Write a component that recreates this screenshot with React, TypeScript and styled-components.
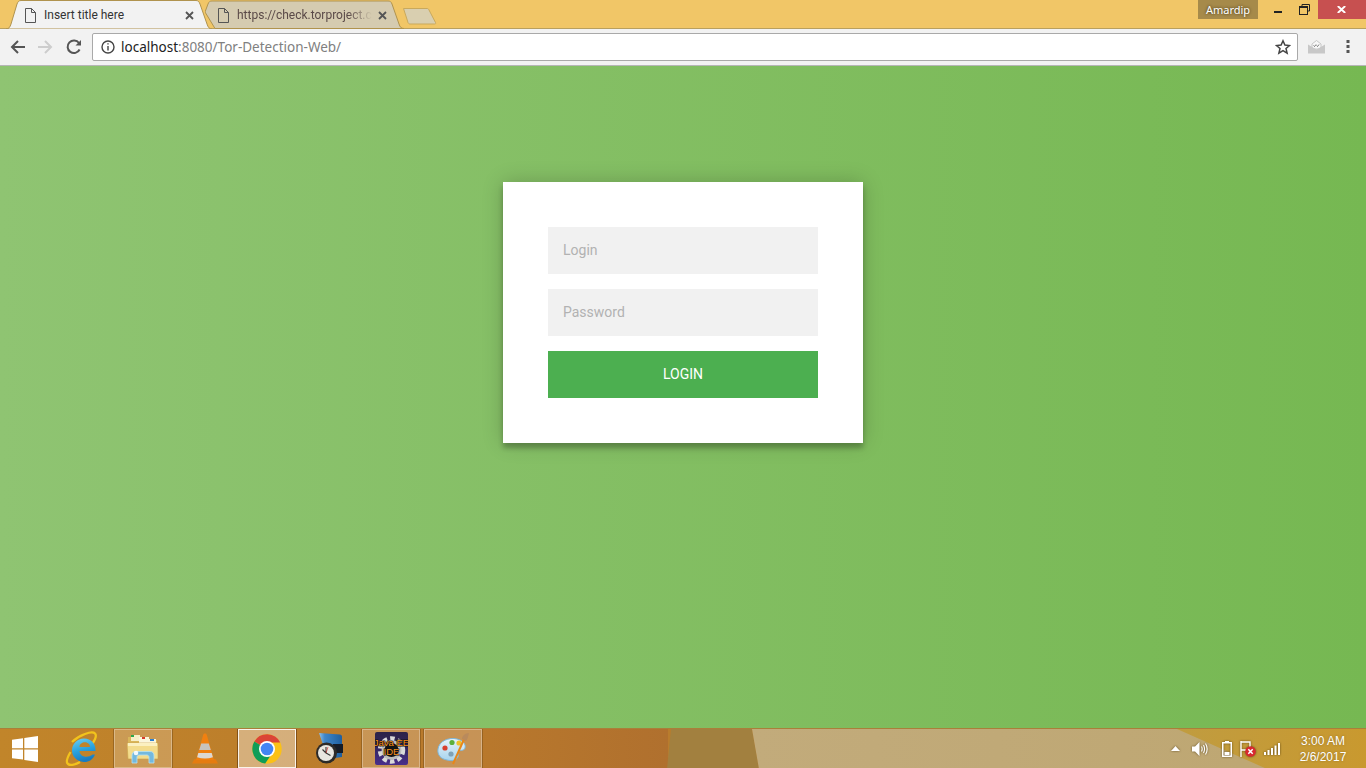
import React from "react";
import styled, { createGlobalStyle } from "styled-components";

const Global = createGlobalStyle`
  html, body { margin: 0; padding: 0; height: 100%; overflow: hidden; }
  #root { height: 100%; }
  * { box-sizing: border-box; }
`;

const Screen = styled.div`
  width: 1366px;
  height: 768px;
  display: flex;
  flex-direction: column;
  font-family: "Open Sans", "Liberation Sans", sans-serif;
`;

const TitleBar = styled.div`
  height: 29px;
  flex: none;
  display: flex;
  justify-content: space-between;
  background: #f1c667;
  border-bottom: 1px solid #b9a05f;
  position: relative;
`;

const TabStrip = styled.div`
  display: flex;
  align-items: flex-start;
  padding-left: 6px;
`;

const Tab = styled.div<{ $w: number; $active?: boolean; $ml?: number }>`
  position: relative;
  width: ${(p) => p.$w}px;
  height: 29px;
  margin-left: ${(p) => p.$ml ?? 0}px;
  z-index: ${(p) => (p.$active ? 2 : 1)};
  flex: none;
`;

const TabShape = styled.svg`
  position: absolute;
  left: 0;
  top: 0;
`;

const TabIcon = styled.svg<{ $left: number }>`
  position: absolute;
  top: 8px;
  left: ${(p) => p.$left}px;
`;

const TabLabel = styled.span<{ $left: number; $active?: boolean }>`
  position: absolute;
  top: 6px;
  left: ${(p) => p.$left}px;
  font: 12px/18px Roboto, "Liberation Sans", sans-serif;
  white-space: nowrap;
  color: ${(p) => (p.$active ? "#333" : "#5b4a48")};
  ${(p) =>
    p.$active
      ? ""
      : "-webkit-mask-image: linear-gradient(to right, #000 82%, transparent 100%);"}
`;

const TabClose = styled.svg<{ $right: number }>`
  position: absolute;
  top: 11px;
  right: ${(p) => p.$right}px;
`;

const NewTab = styled.svg`
  margin: 7px 0 0 -3px;
  position: relative;
  z-index: 0;
  flex: none;
`;

const WindowControls = styled.div`
  display: flex;
  align-items: flex-start;
`;

const UserBadge = styled.div`
  width: 60px;
  height: 19px;
  background: #a68a4a;
  color: #fff;
  font: 11px/19px "Noto Sans", "Liberation Sans", sans-serif;
  text-align: center;
  text-shadow: 0 0 3px rgba(40, 30, 10, 0.9);
`;

const WinButton = styled.div<{ $w: number; $close?: boolean }>`
  width: ${(p) => p.$w}px;
  height: 19px;
  display: flex;
  align-items: center;
  justify-content: center;
  background: ${(p) => (p.$close ? "#c75050" : "transparent")};
`;

const MinGlyph = styled.svg`
  margin: 5px 0 0 10px;
`;

const RestoreGlyph = styled.svg`
  margin-left: 2px;
`;

const CloseXGlyph = styled.svg`
  margin-right: 2px;
`;

const Toolbar = styled.div`
  height: 37px;
  flex: none;
  display: flex;
  align-items: center;
  background: #f2f2f2;
  border-bottom: 1px solid #b6b6b6;
  padding-left: 7px;
`;

const NavButton = styled.div<{ $w: number }>`
  width: ${(p) => p.$w}px;
  height: 28px;
  display: flex;
  align-items: center;
  justify-content: center;
  flex: none;
`;

const ReloadGlyph = styled.svg`
  margin-right: 3px;
`;

const Omnibox = styled.div`
  width: 1206px;
  height: 28px;
  margin: 0 4px 0 2px;
  flex: none;
  display: flex;
  align-items: center;
  background: #fff;
  border: 1px solid #a9a9a9;
  border-radius: 2px;
  padding: 0 6px 0 8px;
`;

const UrlText = styled.div`
  flex: 1;
  margin-left: 6px;
  font: 13.5px/20px "Noto Sans", "Liberation Sans", sans-serif;
  color: #808080;
  white-space: nowrap;
`;

const UrlHost = styled.span`
  color: #222;
`;

const Page = styled.main`
  flex: 1;
  display: flex;
  flex-direction: column;
  align-items: center;
  padding-top: 116px;
  background: linear-gradient(to left, #76b852, #8fc472);
`;

const Card = styled.form`
  width: 360px;
  height: 261px;
  padding: 45px;
  display: flex;
  flex-direction: column;
  gap: 15px;
  background: #fff;
  box-shadow: 0 0 20px rgba(0, 0, 0, 0.2), 0 5px 5px rgba(0, 0, 0, 0.24);
`;

const Field = styled.input`
  width: 270px;
  height: 47px;
  flex: none;
  border: 0;
  outline: 0;
  padding: 14px 15px 16px;
  background: #f1f1f1;
  font: 14px Roboto, sans-serif;
  color: #333;
  &::placeholder { color: #b2b2b2; opacity: 1; }
`;

const Submit = styled.button`
  width: 270px;
  height: 47px;
  flex: none;
  border: 0;
  padding: 0 0 2px;
  background: #4caf50;
  color: #fff;
  font: 14px Roboto, sans-serif;
  text-transform: uppercase;
`;

const Taskbar = styled.footer`
  height: 40px;
  flex: none;
  display: flex;
  align-items: stretch;
  justify-content: space-between;
  position: relative;
  overflow: hidden;
  background: #b97c2d;
  border-top: 1px solid #a97f3a;
`;

const Wallpaper = styled.svg`
  position: absolute;
  left: 0;
  top: 0;
`;

const Launchers = styled.div`
  position: relative;
  display: flex;
  gap: 4px;
`;

const Launcher = styled.div<{ $w?: number; $state?: "open" | "active" }>`
  width: ${(p) => p.$w ?? 58}px;
  height: 39px;
  display: flex;
  align-items: center;
  justify-content: center;
  flex: none;
  background: ${(p) =>
    p.$state === "active"
      ? "rgba(255,255,255,.38)"
      : p.$state === "open"
      ? "rgba(255,255,255,.2)"
      : "transparent"};
  box-shadow: ${(p) =>
    p.$state === "active"
      ? "inset 0 0 0 1px rgba(255,255,255,.85), 0 0 0 1px rgba(90,50,10,.6)"
      : p.$state === "open"
      ? "inset 0 0 0 1px rgba(255,255,255,.3), 0 0 0 1px rgba(110,70,20,.45)"
      : "none"};
`;

const WindowsGlyph = styled.svg`
  margin-left: 2px;
`;

const Tray = styled.div`
  position: relative;
  display: flex;
  align-items: center;
`;

const TrayIcon = styled.svg<{ $ml: number }>`
  margin-left: ${(p) => p.$ml}px;
  flex: none;
  filter: drop-shadow(0 0 1px rgba(70, 50, 10, 0.75));
`;

const Clock = styled.div`
  width: 62px;
  margin-left: 12px;
  margin-right: 12px;
  color: #fff;
  font: 12px/16px "Liberation Sans", sans-serif;
  text-align: center;
  text-shadow: 0 0 2px rgba(90, 70, 20, 0.5);
`;

const DocGlyph = ({ left }: { left: number }) => (
  <TabIcon $left={left} width="14" height="15" viewBox="0 0 14 15" fill="none">
    <path d="M2.500 .5h6l4 4v10h-10z M8.500 .5v4h4" stroke="#555" strokeWidth="1" />
  </TabIcon>
);

const CloseGlyph = ({ right }: { right: number }) => (
  <TabClose $right={right} width="9" height="9" viewBox="0 0 9 9">
    <path d="M1 1l7 7M8 1L1 8" stroke="#555" strokeWidth="1.800" />
  </TabClose>
);

const WindowsLogo = () => (
  <WindowsGlyph width="26" height="26" viewBox="0 0 26 26" fill="#fff">
    <path d="M0 3.800 11 2.300v10H0zM12.300 2.100 26 0v12.300H12.300zM0 13.600h11v10L0 22.200zM12.300 13.600H26V26l-13.700-2.100z" />
  </WindowsGlyph>
);

const IeLogo = () => (
  <svg width="32" height="36" viewBox="0 0 32 36">
    <defs>
      <linearGradient id="ieBlue" x1="0" y1="0" x2="0.300" y2="1">
        <stop offset="0" stopColor="#6fd0f4" />
        <stop offset="0.550" stopColor="#2aa3de" />
        <stop offset="1" stopColor="#1a7cc0" />
      </linearGradient>
    </defs>
    <path d="M7 11C14 4 27-.5 30 2.500 31.500 4 30.500 8 27.500 12.500M5.500 21C2 27 1 31.500 3 33c2.500 2 8 .5 12-2" fill="none" stroke="#f2c31c" strokeWidth="2.300" />
    <g transform="translate(3 0)">
      <path d="M16 7.500c7 0 12 5 11.500 12.500H11.500c.5 6 8 7.500 13 3.500h2.500C25 29 20 31.500 15.500 31 9 30.500 4 25.500 4 19.500 4 12.500 9.500 7.500 16 7.500zM11.500 16h10.500c0-6-10-6.500-10.500 0z" fill="url(#ieBlue)" fillRule="evenodd" />
    </g>
  </svg>
);

const FolderIcon = () => (
  <svg width="32" height="30" viewBox="0 0 32 30">
    <path d="M1 3h11l2 3h16v8H1z" fill="#d9b65a" />
    <rect x="4" y="1" width="9" height="6" fill="#f8efc8" />
    <rect x="4" y="1" width="3" height="2" fill="#2da84a" />
    <rect x="12" y="3" width="10" height="6" fill="#fbf6dc" />
    <rect x="15" y="3" width="3" height="2" fill="#d83a2a" />
    <rect x="20" y="5" width="9" height="5" fill="#fbf6dc" />
    <rect x="23" y="5" width="4" height="2" fill="#2b7fd0" />
    <path d="M0 9h31v16H1z" fill="#f3dc8c" stroke="#c9a24a" strokeWidth=".6" />
    <path d="M1 9h29v3H1z" fill="#fbf0c0" />
    <path d="M5 29v-7c0-3 1-4.500 4-4.500h14c3 0 4 1.500 4 4.500v7h-5v-6c0-1-1-2-2-2h-8c-1 0-2 1-2 2v6z" fill="#74b9de" stroke="#b4e2f5" strokeWidth=".8" />
    <circle cx="9" cy="19" r="2.300" fill="#fff" opacity=".9" />
  </svg>
);

const VlcIcon = () => (
  <svg width="26" height="31" viewBox="0 0 26 31">
    <path d="M2.500 26h21L26 30.500H0z" fill="#e57c10" />
    <path d="M4 27h18L14.700 1.500c-.4-1.500-3-1.500-3.400 0z" fill="#f08010" />
    <path d="M9.200 10.500h7.600l2 6.500H7.200z" fill="#c7c3bd" />
    <path d="M6.300 20h13.400l1.200 4.200c-5 1.600-10.800 1.600-15.800 0z" fill="#dcd8d2" />
  </svg>
);

const ChromeIcon = () => (
  <svg width="30" height="30" viewBox="0 0 30 30">
    <circle cx="15" cy="15" r="14.700" fill="#fbc116" />
    <path d="M15 15 2.300 7.600A14.700 14.700 0 0 1 28.200 8.500H15z" fill="#db4437" />
    <path d="M15 15 2.300 7.600a14.700 14.700 0 0 0 10.900 22L19 21z" fill="#0f9d58" />
    <circle cx="15" cy="15" r="8" fill="#fff" />
    <circle cx="15" cy="15" r="6.300" fill="#4285f4" />
  </svg>
);

const ClockBookIcon = () => (
  <svg width="28" height="31" viewBox="0 0 28 31">
    <defs>
      <linearGradient id="bookBlue" x1="0" y1="0" x2="1" y2="0">
        <stop offset="0" stopColor="#8cc0ea" />
        <stop offset="0.250" stopColor="#3f86c8" />
        <stop offset="1" stopColor="#1f5f9e" />
      </linearGradient>
    </defs>
    <path d="M4 0l21 1.500c1 0 2 1 2 2V24l-14 2z" fill="url(#bookBlue)" />
    <rect x="18" y="11" width="10" height="9" fill="#161c26" />
    <circle cx="11.500" cy="20" r="10.500" fill="#2c2a28" />
    <circle cx="11" cy="20" r="8" fill="#e8e6e0" />
    <path d="M11 20V14M11 20l4.500 2.500M11 20l-3.500-3.500" stroke="#333" strokeWidth="1.100" fill="none" />
    <path d="M11 20l2-6" stroke="#c33" strokeWidth=".7" />
  </svg>
);

const JavaEeIcon = () => (
  <svg width="33" height="33" viewBox="0 0 33 33">
    <defs>
      <linearGradient id="eeBg" x1="0" y1="0" x2="0" y2="1">
        <stop offset="0" stopColor="#2c2348" />
        <stop offset="0.450" stopColor="#31265c" />
        <stop offset="1" stopColor="#4a2f8c" />
      </linearGradient>
    </defs>
    <rect width="33" height="33" rx="2" fill="url(#eeBg)" />
    <circle cx="16.500" cy="18" r="11.500" fill="none" stroke="#d9d9d9" strokeWidth="4.500" strokeDasharray="4.500 3" />
    <circle cx="16.500" cy="18" r="10" fill="#bdbdbd" />
    <circle cx="16.500" cy="18" r="7" fill="#141414" />
    <text x="16.500" y="14" fontFamily="Liberation Sans, sans-serif" fontSize="9.500" fill="#f8921e" stroke="#111" strokeWidth="1.200" paintOrder="stroke" textAnchor="middle">Java EE</text>
    <text x="16.500" y="23" fontFamily="Liberation Sans, sans-serif" fontSize="9.500" fill="#f8921e" stroke="#111" strokeWidth="1.200" paintOrder="stroke" textAnchor="middle">IDE</text>
  </svg>
);

const PaletteIcon = () => (
  <svg width="34" height="34" viewBox="0 0 34 34">
    <defs>
      <linearGradient id="palBg" x1="0" y1="0" x2="0" y2="1">
        <stop offset="0" stopColor="#e6f3fa" />
        <stop offset="1" stopColor="#a8d4ee" />
      </linearGradient>
    </defs>
    <path d="M2 17C3 9 13 5 21 7c6 1.500 9 5 8 9-1 3-4 2-6 3-2 2 0 4-1 6-2 4-7 4-11 3C5 27 1 23 2 17z" fill="url(#palBg)" stroke="#7db7dc" strokeWidth="1" />
    <circle cx="9" cy="16" r="2.600" fill="#d8402e" />
    <circle cx="16" cy="10.500" r="2.600" fill="#5cb03c" />
    <circle cx="23" cy="11" r="2.600" fill="#efc12a" />
    <circle cx="15" cy="22" r="2.600" fill="#7fa2b8" />
    <path d="M29 5 17 32" stroke="#e8871a" strokeWidth="2" />
    <path d="M26 7c0-3 3-6 7-6-1 3-1 6-3 8z" fill="#b98a5c" />
  </svg>
);

export default function App() {
  return (
    <Screen>
      <Global />
      <TitleBar>
        <TabStrip>
          <Tab $w={206} $active>
            <TabShape width="206" height="29" viewBox="0 0 206 29">
              <path d="M0 29 C3 29 4 27 5 24L11 4C12 1.500 13 .5 15 .5H190C192 .5 193 1.500 194 4L201 24C202 27 203 29 206 29Z" fill="#f2f2f2" stroke="#b0934e" />
            </TabShape>
            <DocGlyph left={17} />
            <TabLabel $left={38} $active>Insert title here</TabLabel>
            <CloseGlyph right={18} />
          </Tab>
          <Tab $w={200} $ml={-7}>
            <TabShape width="200" height="29" viewBox="0 0 200 29">
              <path d="M0 12L3 4C4 1.500 5 1 7 1H183C185 1 186 1.500 187 4L194 24C195 27 196 28.500 199 28.500H10Z" fill="#d5cbb0" stroke="#b0934e" />
            </TabShape>
            <DocGlyph left={11} />
            <TabLabel $left={32}>https://check.torproject.c</TabLabel>
            <CloseGlyph right={18} />
          </Tab>
          <NewTab width="36" height="18" viewBox="0 0 36 18">
            <path d="M1.500 1.500H25C26 1.500 26.500 2 27 3L33.500 15.500C34 16.500 33.500 17 32.500 17H8C7 17 6.500 16.500 6 15.500Z" fill="#d9cfb0" stroke="#c9a95c" />
          </NewTab>
        </TabStrip>
        <WindowControls>
          <UserBadge>Amardip</UserBadge>
          <WinButton $w={30}>
            <MinGlyph width="8" height="2" viewBox="0 0 8 2"><rect width="8" height="2" fill="#222" /></MinGlyph>
          </WinButton>
          <WinButton $w={30}>
            <RestoreGlyph width="11" height="11" viewBox="0 0 11 11" fill="none" stroke="#222">
              <path d="M3 2.500V.5h7.500V7H8.500" />
              <rect x=".5" y="2.500" width="8" height="8" strokeWidth="1" />
              <path d="M.5 3.500h8" />
            </RestoreGlyph>
          </WinButton>
          <WinButton $w={48} $close>
            <CloseXGlyph width="9" height="7" viewBox="0 0 9 7"><path d="M.8 0l7.400 7M8.200 0L.8 7" stroke="#fff" strokeWidth="1.900" /></CloseXGlyph>
          </WinButton>
        </WindowControls>
      </TitleBar>

      <Toolbar>
        <NavButton $w={22}>
          <svg width="16" height="16" viewBox="0 0 16 16" fill="none" stroke="#555" strokeWidth="2"><path d="M15 8H2M8 2L2 8l6 6" /></svg>
        </NavButton>
        <NavButton $w={32}>
          <svg width="16" height="16" viewBox="0 0 16 16" fill="none" stroke="#cdcdcd" strokeWidth="2"><path d="M1 8h13M8 2l6 6-6 6" /></svg>
        </NavButton>
        <NavButton $w={29}>
          <ReloadGlyph width="16" height="16" viewBox="0 0 16 16" fill="none" stroke="#555" strokeWidth="2">
            <path d="M13.600 10.500A6.300 6.300 0 1 1 13 4" />
            <path d="M15 1v5.500H9.500z" fill="#555" stroke="none" />
          </ReloadGlyph>
        </NavButton>
        <Omnibox>
          <svg width="14" height="14" viewBox="0 0 14 14" fill="none" stroke="#444" strokeWidth="1.400">
            <circle cx="7" cy="7" r="6" />
            <path d="M7 6v4.500M7 3.200v1.400" />
          </svg>
          <UrlText><UrlHost>localhost</UrlHost>:8080/Tor-Detection-Web/</UrlText>
          <svg width="16" height="16" viewBox="0 0 16 16" fill="none" stroke="#444" strokeWidth="1.500">
            <path d="M8 1.800l1.900 4.300 4.600.4-3.500 3 1.100 4.600L8 11.700l-4.100 2.400 1.100-4.600-3.500-3 4.600-.4z" />
          </svg>
        </Omnibox>
        <NavButton $w={28}>
          <svg width="17" height="14" viewBox="0 0 17 14">
            <path d="M4 4l4.500-3.500L13 4v5H4z" fill="#f8f8f8" stroke="#bbb" strokeWidth=".8" />
            <path d="M0 4.500l8.500 5 8.500-5V13.500H0z" fill="#c8c8c8" />
            <path d="M5.500 5.500l1 1 1.500-2M8.500 5.500l1 1 1.500-2" stroke="#555" strokeWidth=".8" fill="none" />
          </svg>
        </NavButton>
        <NavButton $w={36}>
          <svg width="4" height="14" viewBox="0 0 4 14" fill="#555">
            <rect x=".5" y="0" width="3" height="3" />
            <rect x=".5" y="5" width="3" height="3" />
            <rect x=".5" y="10" width="3" height="3" />
          </svg>
        </NavButton>
      </Toolbar>

      <Page>
        <Card onSubmit={(e) => e.preventDefault()}>
          <Field type="text" placeholder="Login" />
          <Field type="password" placeholder="Password" />
          <Submit type="button">Login</Submit>
        </Card>
      </Page>

      <Taskbar>
        <Wallpaper width="1366" height="40" viewBox="0 0 1366 40" preserveAspectRatio="none">
          <defs>
            <linearGradient id="tan" x1="0" x2="1" y1="0" y2="0">
              <stop offset="0" stopColor="#c2ab7b" />
              <stop offset="1" stopColor="#bda671" />
            </linearGradient>
            <linearGradient id="org" x1="0" x2="1" y1="0" y2="0">
              <stop offset="0" stopColor="#c1852a" />
              <stop offset="0.700" stopColor="#b9792c" />
              <stop offset="1" stopColor="#b0702e" />
            </linearGradient>
            <linearGradient id="gold" x1="0" x2="1" y1="0" y2="0">
              <stop offset="0" stopColor="#c09c40" />
              <stop offset="1" stopColor="#c9992f" />
            </linearGradient>
          </defs>
          <rect x="0" y="0" width="668" height="40" fill="url(#org)" />
          <path d="M671 0H752L759 40H667Z" fill="#a2803f" />
          <path d="M752 0H1366V40H759Z" fill="url(#tan)" />
          <path d="M1177 0H1366V40H1267Z" fill="url(#gold)" />
        </Wallpaper>
        <Launchers>
          <Launcher $w={48}><WindowsLogo /></Launcher>
          <Launcher><IeLogo /></Launcher>
          <Launcher $state="open"><FolderIcon /></Launcher>
          <Launcher><VlcIcon /></Launcher>
          <Launcher $state="active"><ChromeIcon /></Launcher>
          <Launcher><ClockBookIcon /></Launcher>
          <Launcher $state="open"><JavaEeIcon /></Launcher>
          <Launcher $state="open"><PaletteIcon /></Launcher>
        </Launchers>
        <Tray>
          <TrayIcon $ml={0} width="9" height="5" viewBox="0 0 9 5"><path d="M4.500 0L9 5H0z" fill="#fff" /></TrayIcon>
          <TrayIcon $ml={12} width="16" height="16" viewBox="0 0 16 16" fill="none">
            <path d="M0 5.500h3L7.500 1v14L3 10.500H0z" fill="#fff" />
            <path d="M9.500 5.500c.8 1.500.8 3.500 0 5M11.500 4c1.300 2.500 1.300 5.500 0 8M13.500 2.500c2 3.300 2 7.700 0 11" stroke="#fff" strokeWidth="1.100" />
          </TrayIcon>
          <TrayIcon $ml={14} width="10" height="16" viewBox="0 0 10 16" fill="none">
            <rect x="3" y="0" width="4" height="2" fill="#fff" />
            <rect x=".75" y="1.750" width="8.500" height="13.500" stroke="#fff" strokeWidth="1.500" />
            <rect x="2.500" y="11" width="5" height="3" fill="#fff" />
          </TrayIcon>
          <TrayIcon $ml={8} width="16" height="16" viewBox="0 0 16 16">
            <path d="M1 0v16M1 1h9v8H1" stroke="#fff" strokeWidth="1.400" fill="none" />
            <circle cx="10.500" cy="10.500" r="5.300" fill="#d8282f" />
            <path d="M8.300 8.300l4.400 4.400M12.700 8.300l-4.400 4.400" stroke="#fff" strokeWidth="1.500" />
          </TrayIcon>
          <TrayIcon $ml={8} width="16" height="12" viewBox="0 0 16 12" fill="#fff">
            <rect x="0" y="9" width="2" height="3" />
            <rect x="3.500" y="7" width="2" height="5" />
            <rect x="7" y="5" width="2" height="7" />
            <rect x="10.500" y="2.500" width="2" height="9.500" />
            <rect x="14" y="0" width="2" height="12" />
          </TrayIcon>
          <Clock>
            3:00 AM
            <br />
            2/6/2017
          </Clock>
        </Tray>
      </Taskbar>
    </Screen>
  );
}
